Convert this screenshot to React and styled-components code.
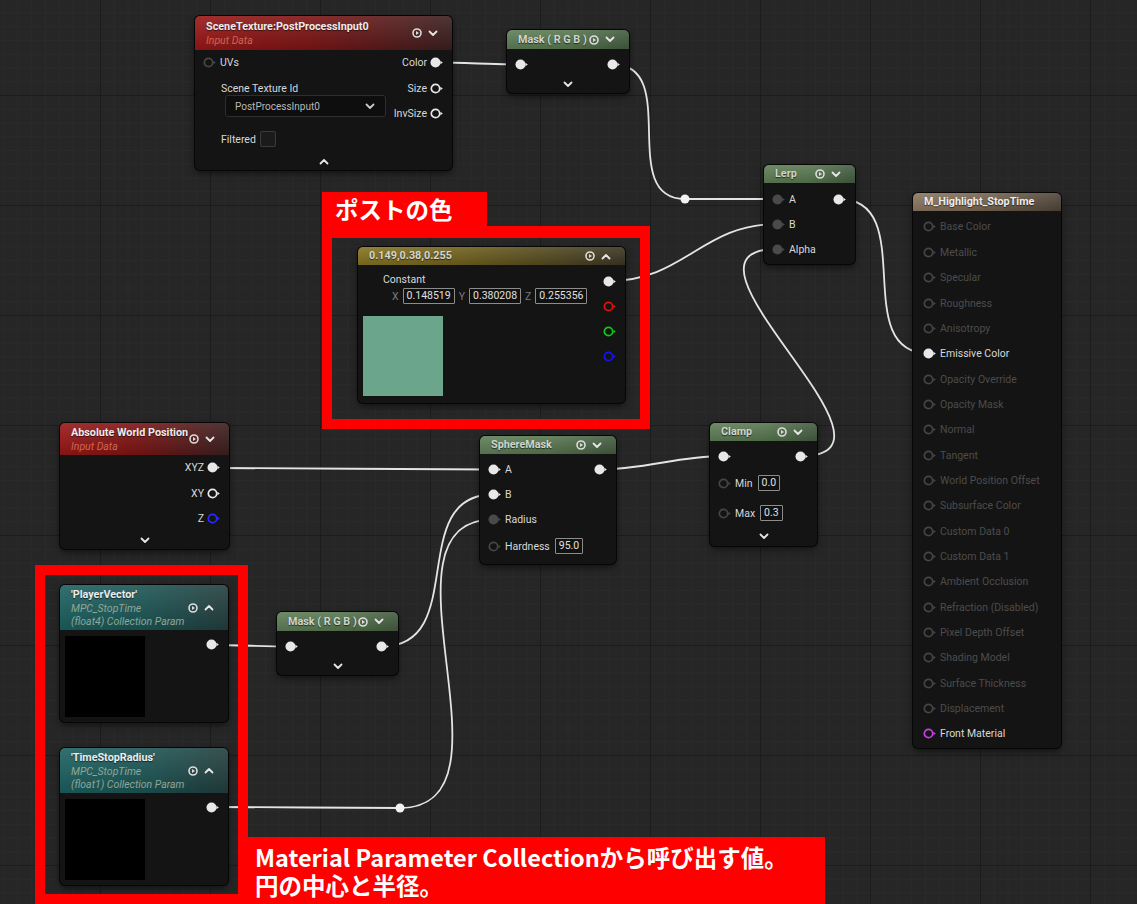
import React from 'react';
import styled, { createGlobalStyle } from 'styled-components';

const GlobalStyle = createGlobalStyle`
  html, body { margin: 0; padding: 0; background: #262626; }
  body { font-family: Roboto, "Noto Sans", "Liberation Sans", sans-serif; }
`;

const tones = {
  red: 'linear-gradient(90deg, #9a1616 0%, #7c1414 45%, #3a1f1f 100%)',
  green: 'linear-gradient(90deg, #5f7e57 0%, #58774f 50%, #435b40 100%)',
  gold: 'linear-gradient(90deg, #867420 0%, #6e5f1c 40%, #3b3522 100%)',
  teal: 'linear-gradient(90deg, #1c6060 0%, #1b5454 50%, #233d3d 100%)',
  brown: 'linear-gradient(90deg, #8c7761 0%, #76644f 50%, #4e4438 100%)',
};

const Canvas = styled.div`
  position: relative;
  width: 1137px;
  height: 904px;
  overflow: hidden;
  background-color: #262626;
  background-image:
    linear-gradient(to bottom, #1c1c1c 0, #1c1c1c 1px, transparent 1px),
    linear-gradient(to right, #1c1c1c 0, #1c1c1c 1px, transparent 1px),
    linear-gradient(to bottom, #2a2a2a 0, #2a2a2a 1px, transparent 1px),
    linear-gradient(to right, #2a2a2a 0, #2a2a2a 1px, transparent 1px);
  background-size: 110px 110px, 110px 110px, 13.75px 13.75px, 13.75px 13.75px;
  background-position: 0 95px, 100px 0, 0 95px, 100px 0;
`;

const Wires = styled.svg`
  position: absolute;
  left: 0;
  top: 0;
  z-index: 0;
`;

const Node = styled.div`
  position: absolute;
  left: ${p => p.$x}px;
  top: ${p => p.$y}px;
  width: ${p => p.$w}px;
  z-index: 1;
  background: #141414;
  border-radius: 5px;
  box-shadow: 0 0 0 1px #060606, 0 3px 7px rgba(0, 0, 0, 0.55);
  overflow: hidden;
  color: #d8d8d8;
  font-size: 10.5px;
`;

const Header = styled.div`
  display: flex;
  align-items: center;
  justify-content: space-between;
  height: ${p => p.$h || 18}px;
  padding: 0 14px 0 11px;
  box-sizing: border-box;
  background: linear-gradient(180deg, rgba(255, 255, 255, 0.1), rgba(0, 0, 0, 0.12)), ${p => tones[p.$tone]};
`;

const HeaderText = styled.div`
  display: flex;
  flex-direction: column;
`;

const Title = styled.div`
  font-weight: 700;
  font-size: 10.8px;
  line-height: 14px;
  color: ${p => p.$color || '#ececec'};
  white-space: nowrap;
  text-shadow: 0 1px 1px rgba(0, 0, 0, 0.6);
`;

const Sub = styled.div`
  font-style: italic;
  line-height: 13px;
  color: ${p => p.$color};
  white-space: nowrap;
  &:first-of-type { margin-top: ${p => p.$gap || 0}px; }
`;

const HeaderIcons = styled.div`
  display: flex;
  align-items: center;
  gap: 6px;
  flex-shrink: 0;
`;

const Body = styled.div`
  display: grid;
  grid-template-columns: minmax(0, 1fr) auto;
  padding: ${p => p.$pad || '0'};
`;

const Col = styled.div`
  display: flex;
  flex-direction: column;
  align-items: ${p => (p.$right ? 'flex-end' : 'flex-start')};
  padding: ${p => p.$pad || '0'};
`;

const PinRow = styled.div`
  display: flex;
  align-items: center;
  flex-direction: ${p => (p.$right ? 'row-reverse' : 'row')};
  gap: 3px;
  height: ${p => p.$h || 25}px;
  color: ${p => (p.$dim ? '#4c4c4c' : '#d8d8d8')};
  white-space: nowrap;
`;

const PinSvg = styled.svg`
  display: block;
  flex-shrink: 0;
`;

const Footer = styled.div`
  display: flex;
  justify-content: center;
  align-items: center;
  height: ${p => p.$h}px;
  padding-top: ${p => p.$pt || 0}px;
  padding-bottom: ${p => p.$pb || 0}px;
`;

const FieldLabel = styled.div`
  margin-left: 18px;
  padding-top: 8px;
  line-height: 13px;
`;

const Dropdown = styled.div`
  margin-left: 22px;
  width: 161px;
  height: 22px;
  box-sizing: border-box;
  display: flex;
  align-items: center;
  justify-content: space-between;
  padding: 0 10px 0 9px;
  border: 1px solid #2e2e2e;
  border-radius: 3px;
  background: #0e0e0e;
  color: #b8b8b8;
  font-size: 10px;
`;

const CheckRow = styled.div`
  display: flex;
  align-items: center;
  gap: 4px;
  margin: 13px 0 0 18px;
  height: 18px;
`;

const CheckBox = styled.div`
  width: 16px;
  height: 16px;
  box-sizing: border-box;
  border: 1px solid #3a3a3a;
  border-radius: 2px;
  background: #1b1b1b;
`;

const ValueBox = styled.span`
  display: inline-block;
  height: 16px;
  box-sizing: border-box;
  line-height: 14px;
  padding: 0 3px;
  border: 1px solid #8c8c8c;
  border-radius: 1px;
  color: #e0e0e0;
  background: #111;
  margin-left: ${p => p.$ml || 0}px;
`;

const ConstLabel = styled.div`
  margin: 8px 0 0 25px;
  line-height: 14px;
`;

const VectorRow = styled.div`
  display: flex;
  align-items: center;
  gap: 4px;
  margin: 1px 0 0 34px;
  height: 16px;
`;

const Axis = styled.span`
  color: #7a7a7a;
`;

const Swatch = styled.div`
  width: 80px;
  height: ${p => p.$h || 80}px;
  margin: ${p => p.$m};
  background: ${p => p.$color};
`;

const AnnoGroup = styled.div`
  position: absolute;
  left: ${p => p.$x}px;
  top: ${p => p.$y}px;
  z-index: 2;
  display: flex;
  flex-direction: column;
`;

const AnnoTab = styled.div`
  width: ${p => p.$w}px;
  height: ${p => p.$h}px;
  box-sizing: border-box;
  padding: ${p => p.$pad};
  background: #ff0000;
  color: #ffffff;
  font-family: "Noto Sans CJK JP", "Noto Sans", sans-serif;
  font-weight: 700;
  font-size: 23.5px;
  line-height: ${p => p.$lh}px;
  white-space: nowrap;
`;

const AnnoLine = styled.div`
  height: 28px;
  line-height: 28px;
`;

const AnnoFrame = styled.div`
  width: ${p => p.$w}px;
  height: ${p => p.$h}px;
  box-sizing: border-box;
  border: 10px solid #ff0000;
  border-top-width: ${p => p.$top || 10}px;
`;

const PlayIcon = () => (
  <svg width="10" height="10" viewBox="0 0 10 10">
    <circle cx="5" cy="5" r="4" fill="none" stroke="#dcdcdc" strokeWidth="1.6" />
    <path d="M4 3 L7 5 L4 7 Z" fill="#dcdcdc" />
  </svg>
);

const Chevron = ({ up, color = '#e6e6e6' }) => (
  <svg width="10" height="7" viewBox="0 0 10 7">
    <path
      d={up ? 'M1.5 5.5 L5 2 L8.5 5.5' : 'M1.5 1.5 L5 5 L8.5 1.5'}
      fill="none"
      stroke={color}
      strokeWidth="1.8"
      strokeLinecap="round"
      strokeLinejoin="round"
    />
  </svg>
);

const Pin = ({ kind = 'ring', color = '#e8e8e8' }) => (
  <PinSvg width="14" height="11" viewBox="0 0 14 11">
    {kind === 'fill' ? (
      <circle cx="5.5" cy="5.5" r="5" fill={color} />
    ) : (
      <circle cx="5.5" cy="5.5" r="4.2" fill="none" stroke={color} strokeWidth="1.7" />
    )}
    <path d="M10.4 3.7 L12.8 5.5 L10.4 7.3 Z" fill={color} />
  </PinSvg>
);

const DIM = '#454545';
const DARK = '#4a4a4a';

const wirePath = ([x1, y1], [x2, y2]) => {
  const dx = x2 - x1;
  const dy = Math.abs(y2 - y1);
  const t = dx >= 0
    ? (dx + dy) / 3
    : (3 * Math.min(-dx, 200) + 1.5 * Math.min(dy, 200)) / 3;
  return `M${x1} ${y1} C${x1 + t} ${y1} ${x2 - t} ${y2} ${x2} ${y2}`;
};

const wires = [
  [[436, 62.5], [520, 64.5]],
  [[613, 64.5], [685, 199]],
  [[685, 199], [777, 199]],
  [[609, 281], [777, 224]],
  [[801, 456], [777, 249]],
  [[839, 199], [929, 353.5]],
  [[600, 469.5], [723, 456]],
  [[213, 468], [493, 469.5]],
  [[382, 646.5], [493, 494.5]],
  [[212, 645], [290, 646.5]],
  [[212, 807], [400, 808]],
  [[400, 808], [493, 519.5]],
];

const knots = [[685, 199], [400, 808]];

const outputs = [
  'Base Color', 'Metallic', 'Specular', 'Roughness', 'Anisotropy', 'Emissive Color',
  'Opacity Override', 'Opacity Mask', 'Normal', 'Tangent', 'World Position Offset',
  'Subsurface Color', 'Custom Data 0', 'Custom Data 1', 'Ambient Occlusion',
  'Refraction (Disabled)', 'Pixel Depth Offset', 'Shading Model', 'Surface Thickness',
  'Displacement', 'Front Material',
];

const MaskNode = ({ x, y, w }) => (
  <Node $x={x} $y={y} $w={w}>
    <Header $tone="green" $h={19}>
      <Title $color="#cfd4cc">Mask ( R G B )</Title>
      <HeaderIcons><PlayIcon /><Chevron /></HeaderIcons>
    </Header>
    <Body $pad="3px 0 0 0">
      <Col $pad="0 0 0 8px"><PinRow><Pin kind="fill" /></PinRow></Col>
      <Col $right $pad="0 8px 0 0"><PinRow $right><Pin kind="fill" /></PinRow></Col>
    </Body>
    <Footer $h={14} $pb={2}><Chevron /></Footer>
  </Node>
);

const ParamNode = ({ y, name, type }) => (
  <Node $x={60} $y={y} $w={168}>
    <Header $tone="teal" $h={45}>
      <HeaderText>
        <Title>{name}</Title>
        <Sub $color="#8ea797" $gap={1}>MPC_StopTime</Sub>
        <Sub $color="#8ea797">({type}) Collection Param</Sub>
      </HeaderText>
      <HeaderIcons><PlayIcon /><Chevron up /></HeaderIcons>
    </Header>
    <Body>
      <Swatch $color="#000" $h={81} $m="6px 0 5px 5px" />
      <Col $right $pad="9px 8px 0 0"><PinRow $right $h={11}><Pin kind="fill" /></PinRow></Col>
    </Body>
  </Node>
);

export default function App() {
  return (
    <Canvas>
      <GlobalStyle />
      <Wires width="1137" height="904" viewBox="0 0 1137 904">
        {wires.map((w, i) => (
          <path key={i} d={wirePath(w[0], w[1])} fill="none" stroke="#e4e4e4" strokeWidth="1.8" />
        ))}
        {knots.map(([kx, ky], i) => (
          <circle key={i} cx={kx} cy={ky} r="4.5" fill="#f2f2f2" />
        ))}
      </Wires>

      <Node $x={195} $y={16} $w={257}>
        <Header $tone="red" $h={34}>
          <HeaderText>
            <Title>SceneTexture:PostProcessInput0</Title>
            <Sub $color="#cf6552">Input Data</Sub>
          </HeaderText>
          <HeaderIcons><PlayIcon /><Chevron /></HeaderIcons>
        </Header>
        <Body>
          <Col $pad="0 0 0 8px">
            <PinRow $h={24}><Pin color="#474747" />UVs</PinRow>
            <FieldLabel>Scene Texture Id</FieldLabel>
            <Dropdown>PostProcessInput0<Chevron color="#c8c8c8" /></Dropdown>
            <CheckRow>Filtered<CheckBox /></CheckRow>
          </Col>
          <Col $right $pad="0 8px 0 0">
            <PinRow $right $h={25.5}><Pin kind="fill" />Color</PinRow>
            <PinRow $right $h={25.5}><Pin />Size</PinRow>
            <PinRow $right $h={25.5}><Pin />InvSize</PinRow>
          </Col>
        </Body>
        <Footer $h={18} $pt={4}><Chevron up /></Footer>
      </Node>

      <MaskNode x={507} y={30} w={122} />

      <Node $x={764} $y={165} $w={91}>
        <Header $tone="green">
          <Title $color="#cfd4cc">Lerp</Title>
          <HeaderIcons><PlayIcon /><Chevron /></HeaderIcons>
        </Header>
        <Body $pad="3.5px 0 2px 0">
          <Col $pad="0 0 0 8px">
            <PinRow><Pin kind="fill" color={DARK} />A</PinRow>
            <PinRow><Pin kind="fill" color={DARK} />B</PinRow>
            <PinRow><Pin kind="fill" color={DARK} />Alpha</PinRow>
          </Col>
          <Col $right $pad="0 8px 0 0"><PinRow $right><Pin kind="fill" /></PinRow></Col>
        </Body>
      </Node>

      <Node $x={913} $y={193} $w={148}>
        <Header $tone="brown">
          <Title>M_Highlight_StopTime</Title>
        </Header>
        <Col $pad="3.3px 0 1.3px 10px">
          {outputs.map(o => {
            const on = o === 'Emissive Color';
            const front = o === 'Front Material';
            return (
              <PinRow key={o} $h={25.35} $dim={!on && !front}>
                {on ? <Pin kind="fill" /> : <Pin color={front ? '#c63fe0' : DIM} />}
                {o}
              </PinRow>
            );
          })}
        </Col>
      </Node>

      <Node $x={358} $y={247} $w={267}>
        <Header $tone="gold">
          <Title $color="#d6d6d0">0.149,0.38,0.255</Title>
          <HeaderIcons><PlayIcon /><Chevron up /></HeaderIcons>
        </Header>
        <Body>
          <Col>
            <ConstLabel>Constant</ConstLabel>
            <VectorRow>
              <Axis>X</Axis><ValueBox>0.148519</ValueBox>
              <Axis>Y</Axis><ValueBox>0.380208</ValueBox>
              <Axis>Z</Axis><ValueBox>0.255356</ValueBox>
            </VectorRow>
            <Swatch $color="#6aa58c" $m="12px 0 7px 5px" />
          </Col>
          <Col $right $pad="3.5px 8px 0 0">
            <PinRow $right><Pin kind="fill" /></PinRow>
            <PinRow $right><Pin color="#e01010" /></PinRow>
            <PinRow $right><Pin color="#10c810" /></PinRow>
            <PinRow $right><Pin color="#1414f0" /></PinRow>
          </Col>
        </Body>
      </Node>

      <Node $x={60} $y={423} $w={169}>
        <Header $tone="red" $h={32}>
          <HeaderText>
            <Title>Absolute World Position</Title>
            <Sub $color="#cf6552">Input Data</Sub>
          </HeaderText>
          <HeaderIcons><PlayIcon /><Chevron /></HeaderIcons>
        </Header>
        <Body>
          <Col />
          <Col $right $pad="0 8px 0 0">
            <PinRow $right $h={25.5}><Pin kind="fill" />XYZ</PinRow>
            <PinRow $right $h={25.5}><Pin />XY</PinRow>
            <PinRow $right $h={25.5}><Pin color="#2a2aff" />Z</PinRow>
          </Col>
        </Body>
        <Footer $h={17}><Chevron /></Footer>
      </Node>

      <Node $x={480} $y={436} $w={136}>
        <Header $tone="green">
          <Title $color="#cfd4cc">SphereMask</Title>
          <HeaderIcons><PlayIcon /><Chevron /></HeaderIcons>
        </Header>
        <Body $pad="3px 0 4px 0">
          <Col $pad="0 0 0 8px">
            <PinRow><Pin kind="fill" />A</PinRow>
            <PinRow><Pin kind="fill" />B</PinRow>
            <PinRow><Pin kind="fill" color={DARK} />Radius</PinRow>
            <PinRow $h={28}><Pin color={DIM} />Hardness<ValueBox $ml={2}>95.0</ValueBox></PinRow>
          </Col>
          <Col $right $pad="0 8px 0 0"><PinRow $right><Pin kind="fill" /></PinRow></Col>
        </Body>
      </Node>

      <Node $x={710} $y={423} $w={107}>
        <Header $tone="green">
          <Title $color="#cfd4cc">Clamp</Title>
          <HeaderIcons><PlayIcon /><Chevron /></HeaderIcons>
        </Header>
        <Body $pad="2px 0 0 0">
          <Col $pad="0 0 0 8px">
            <PinRow $h={26}><Pin kind="fill" /></PinRow>
            <PinRow $h={28}><Pin color={DIM} />Min<ValueBox $ml={2}>0.0</ValueBox></PinRow>
            <PinRow $h={32}><Pin color={DIM} />Max<ValueBox $ml={2}>0.3</ValueBox></PinRow>
          </Col>
          <Col $right $pad="0 8px 0 0"><PinRow $right $h={26}><Pin kind="fill" /></PinRow></Col>
        </Body>
        <Footer $h={14} $pb={3}><Chevron /></Footer>
      </Node>

      <ParamNode y={585} name="'PlayerVector'" type="float4" />
      <MaskNode x={277} y={612} w={121} />
      <ParamNode y={748} name="'TimeStopRadius'" type="float1" />

      <AnnoGroup $x={322} $y={192}>
        <AnnoTab $w={165} $h={34} $lh={34} $pad="0 0 0 13px">ポストの色</AnnoTab>
        <AnnoFrame $w={328} $h={203} $top={12} />
      </AnnoGroup>

      <AnnoGroup $x={35} $y={565}>
        <AnnoFrame $w={213} $h={339} />
      </AnnoGroup>
      <AnnoGroup $x={243} $y={837}>
        <AnnoTab $w={582} $h={67} $lh={28} $pad="6px 0 0 12px">
          <AnnoLine>Material Parameter Collectionから呼び出す値。</AnnoLine>
          <AnnoLine>円の中心と半径。</AnnoLine>
        </AnnoTab>
      </AnnoGroup>
    </Canvas>
  );
}
